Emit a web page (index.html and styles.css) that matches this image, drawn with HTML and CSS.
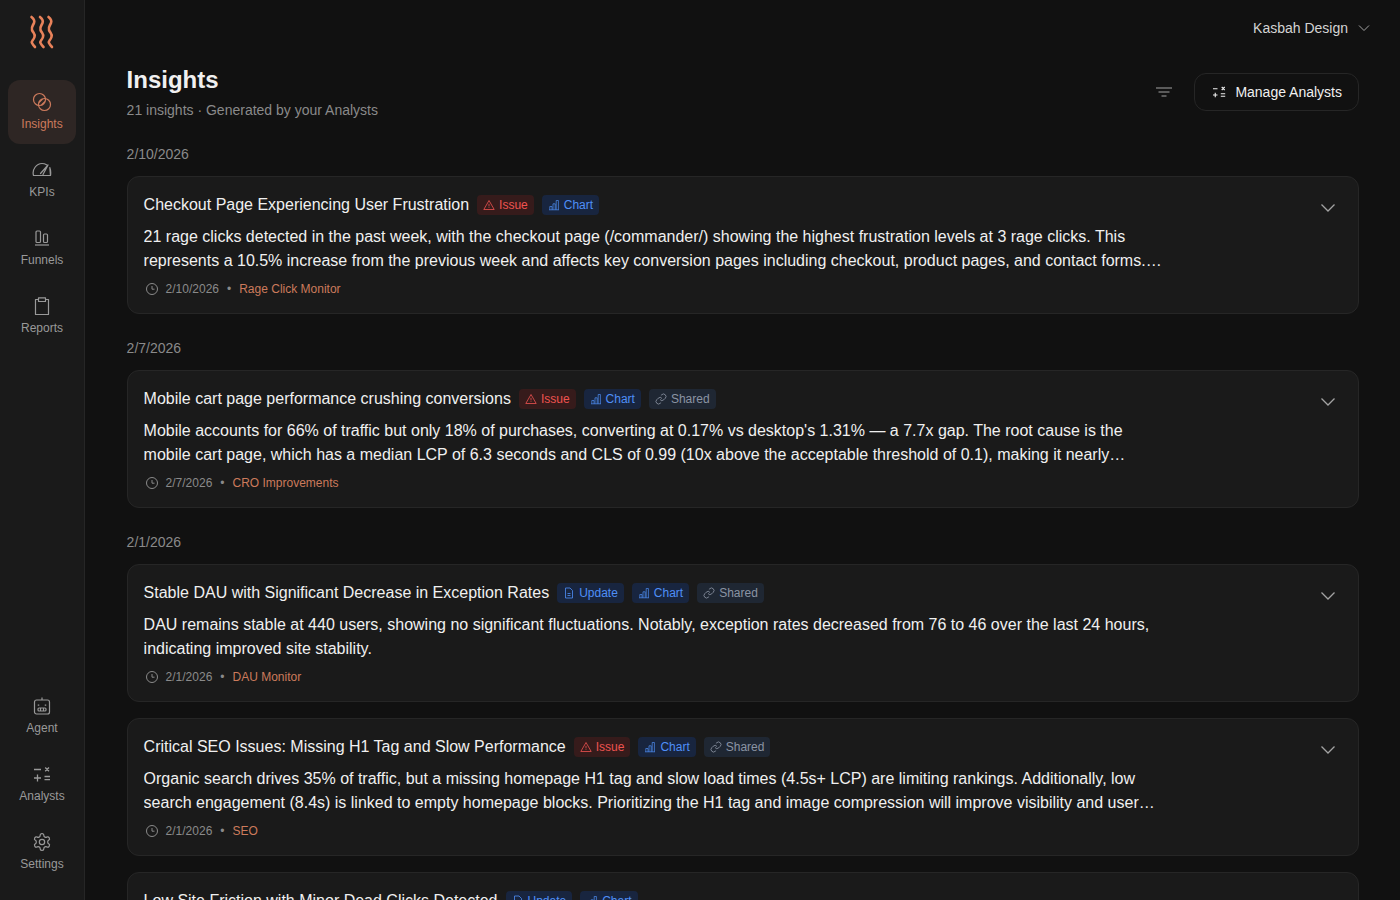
FILE: index.html
```html
<!DOCTYPE html>
<html lang="en">
<head>
  <meta charset="UTF-8">
  <title>Insights</title>
  <link rel="stylesheet" href="styles.css">
</head>
<body>
  <!-- tag and card icons, reused below -->
  <svg class="sprite" xmlns="http://www.w3.org/2000/svg">
    <symbol id="i-issue" viewBox="0 0 12 12">
      <path d="M6 1.500L11.200 10.500H.8z" stroke-linejoin="round"/><path d="M6 4.800v2.600M6 8.300v.7"/>
    </symbol>
    <symbol id="i-chart" viewBox="0 0 12 12">
      <path stroke-width=".7" d="M1 10.800h10M1.800 10.800V7.500h2.200v3.300M5 10.800V4.800h2.200v6M8.200 10.800V1.500h2.200v9.300"/>
    </symbol>
    <symbol id="i-shared" viewBox="0 0 24 24">
      <path stroke-width="1.700" d="M10 13a5 5 0 0 0 7.540.54l3-3a5 5 0 0 0-7.070-7.070l-1.720 1.710"/>
      <path stroke-width="1.700" d="M14 11a5 5 0 0 0-7.540-.54l-3 3a5 5 0 0 0 7.070 7.070l1.710-1.710"/>
    </symbol>
    <symbol id="i-update" viewBox="0 0 12 12">
      <path d="M2.500 1h4.500l2.500 2.500V11h-7z" stroke-linejoin="round"/><path d="M4.500 6.500h3M4.500 8.500h3"/>
    </symbol>
    <symbol id="i-clock" viewBox="0 0 14 14">
      <circle cx="7" cy="7" r="5.500"/><path d="M7 4v3.200h2.500"/>
    </symbol>
    <symbol id="i-chevron" viewBox="0 0 16 16">
      <path d="M1.500 4.500L8 11l6.500-6.500"/>
    </symbol>
  </svg>

  <aside class="sidebar">
    <div class="logo">
      <svg width="26" height="34" viewBox="0 0 26 34" fill="none" stroke="#e8825a" stroke-width="2.600" stroke-linecap="round">
        <path d="M2.500 2c2.500 2 3.500 3.500 2.500 6S2 12 3 15s3.500 3.500 2.500 7S2 26 3 28s2 3 3 4"/>
        <path d="M11 2c2.500 2 3.500 3.500 2.500 6s-3 4-2 7 3.500 3.500 2.500 7-3.500 4-2.500 6 2 3 3 4"/>
        <path d="M19.500 2c2.500 2 3.500 3.500 2.500 6s-3 4-2 7 3.500 3.500 2.500 7-3.500 4-2.500 6 2 3 3 4"/>
      </svg>
    </div>
    <nav class="nav">
      <a class="nav-item active">
        <svg class="nav-icon" viewBox="0 0 20 20" fill="none" stroke="currentColor" stroke-width="1.200">
          <circle cx="7.500" cy="7.500" r="6"/><circle cx="12.500" cy="12.500" r="6"/>
          <path d="M7 10.500l3.500-3.500M9.500 13l3.500-3.500"/>
        </svg>
        Insights
      </a>
      <a class="nav-item">
        <svg class="nav-icon" viewBox="0 0 20 20" fill="none" stroke="currentColor" stroke-width="1.200" stroke-linejoin="round" stroke-linecap="round">
          <path d="M1.500 15.500c-1.700-6 3-12 8.500-12 1.800 0 3.300.5 4.500 1.300M17.800 7.500c1 2.700 1.100 5.500.7 8z"/>
          <path d="M1.500 15.500h17M8.500 13.500l7.500-8.500M11 14.500l5-9.500"/>
        </svg>
        KPIs
      </a>
      <a class="nav-item">
        <svg class="nav-icon" viewBox="0 0 20 20" fill="none" stroke="currentColor" stroke-width="1.200">
          <rect x="4" y="3" width="4.500" height="11.500" rx="1"/><rect x="11.500" y="6" width="4" height="8.500" rx="1"/>
          <path d="M3 17h14"/>
        </svg>
        Funnels
      </a>
      <a class="nav-item">
        <svg class="nav-icon" viewBox="0 0 20 20" fill="none" stroke="currentColor" stroke-width="1.200" stroke-linejoin="round">
          <path d="M6.500 3.500H3.500v15h13v-15h-3"/><path d="M6.500 1.800h7v3.700h-7z"/>
        </svg>
        Reports
      </a>
      <div class="nav-spacer"></div>
      <a class="nav-item">
        <svg class="nav-icon" viewBox="0 0 20 20" fill="none" stroke="currentColor" stroke-width="1.200">
          <rect x="2.500" y="4" width="15" height="14" rx="2"/><path d="M10 1.500V4"/>
          <path d="M6.500 8.500v1.200M13.500 8.500v1.200" stroke-width="1.500"/>
          <rect x="6" y="12" width="8" height="3" rx="1"/><path d="M8.500 12v3M11.500 12v3"/>
        </svg>
        Agent
      </a>
      <a class="nav-item">
        <svg class="nav-icon" viewBox="0 0 20 20" fill="none" stroke="currentColor" stroke-width="1.300">
          <path d="M2 5.500h7M13.200 3.500l3.800 3.800M17 3.500l-3.800 3.800M2 14h7M5.500 10.500v7M12.500 12.500H18M12.500 15.700H18"/>
        </svg>
        Analysts
      </a>
      <a class="nav-item">
        <svg class="nav-icon" viewBox="0 0 24 24" fill="none" stroke="currentColor" stroke-width="1.450" stroke-linejoin="round">
          <path d="M12.220 2h-.44a2 2 0 0 0-2 2v.18a2 2 0 0 1-1 1.730l-.43.250a2 2 0 0 1-2 0l-.15-.08a2 2 0 0 0-2.730.730l-.22.380a2 2 0 0 0 .730 2.730l.15.100a2 2 0 0 1 1 1.720v.510a2 2 0 0 1-1 1.740l-.15.090a2 2 0 0 0-.730 2.730l.22.380a2 2 0 0 0 2.730.730l.15-.08a2 2 0 0 1 2 0l.43.250a2 2 0 0 1 1 1.730V20a2 2 0 0 0 2 2h.44a2 2 0 0 0 2-2v-.18a2 2 0 0 1 1-1.730l.43-.25a2 2 0 0 1 2 0l.15.080a2 2 0 0 0 2.730-.730l.22-.390a2 2 0 0 0-.730-2.730l-.15-.080a2 2 0 0 1-1-1.740v-.5a2 2 0 0 1 1-1.740l.15-.090a2 2 0 0 0 .730-2.730l-.22-.380a2 2 0 0 0-2.730-.730l-.15.080a2 2 0 0 1-2 0l-.43-.25a2 2 0 0 1-1-1.730V4a2 2 0 0 0-2-2z"/>
          <circle cx="12" cy="12" r="3.200"/>
        </svg>
        Settings
      </a>
    </nav>
  </aside>

  <div class="main">
    <div class="topbar">
      <span class="account">Kasbah Design</span>
      <svg width="12" height="12" viewBox="0 0 12 12" fill="none" stroke="#a3a3a3" stroke-width="1"><path d="M1 3.500l5 5 5-5"/></svg>
    </div>

    <div class="content">
      <header class="page-head">
        <div>
          <h1>Insights</h1>
          <p class="subtitle">21 insights · Generated by your Analysts</p>
        </div>
        <div class="head-actions">
          <svg width="18" height="18" viewBox="0 0 18 18" fill="none" stroke="#a3a3a3" stroke-width="1.200"><path d="M1 5h16M3.500 9h11M6.500 13h5"/></svg>
          <button class="manage-btn">
            <svg width="14" height="14" viewBox="0 0 14 14" fill="none" stroke="#f0f0f0" stroke-width="1.100"><path d="M1 3.700h4.500M9.700 2l3 3M12.700 2l-3 3M1 10h4.500M3.250 7.800v4.400M8.800 8.700h4.400M8.800 11.300h4.400"/></svg>
            Manage Analysts
          </button>
        </div>
      </header>

      <section class="group">
        <div class="group-date">2/10/2026</div>
        <article class="card">
          <div class="card-body">
            <div class="card-title">
              <span>Checkout Page Experiencing User Frustration</span>
              <span class="tag tag-issue"><svg class="tag-icon"><use href="#i-issue"/></svg>Issue</span>
              <span class="tag tag-chart"><svg class="tag-icon"><use href="#i-chart"/></svg>Chart</span>
            </div>
            <p class="card-text">21 rage clicks detected in the past week, with the checkout page (/commander/) showing the highest frustration levels at 3 rage clicks. This represents a 10.5% increase from the previous week and affects key conversion pages including checkout, product pages, and contact forms. Addressing these friction points should be a priority for the next sprint.</p>
            <div class="card-meta">
              <svg class="clock"><use href="#i-clock"/></svg>
              <span>2/10/2026</span><span class="dot">•</span><span class="source">Rage Click Monitor</span>
            </div>
          </div>
          <svg class="card-chevron"><use href="#i-chevron"/></svg>
        </article>
      </section>

      <section class="group">
        <div class="group-date">2/7/2026</div>
        <article class="card">
          <div class="card-body">
            <div class="card-title">
              <span>Mobile cart page performance crushing conversions</span>
              <span class="tag tag-issue"><svg class="tag-icon"><use href="#i-issue"/></svg>Issue</span>
              <span class="tag tag-chart"><svg class="tag-icon"><use href="#i-chart"/></svg>Chart</span>
              <span class="tag tag-shared"><svg class="tag-icon"><use href="#i-shared"/></svg>Shared</span>
            </div>
            <p class="card-text">Mobile accounts for 66% of traffic but only 18% of purchases, converting at 0.17% vs desktop's 1.31% — a 7.7x gap. The root cause is the mobile cart page, which has a median LCP of 6.3 seconds and CLS of 0.99 (10x above the acceptable threshold of 0.1), making it nearly impossible for shoppers to complete their purchase on a phone.</p>
            <div class="card-meta">
              <svg class="clock"><use href="#i-clock"/></svg>
              <span>2/7/2026</span><span class="dot">•</span><span class="source">CRO Improvements</span>
            </div>
          </div>
          <svg class="card-chevron"><use href="#i-chevron"/></svg>
        </article>
      </section>

      <section class="group">
        <div class="group-date">2/1/2026</div>
        <article class="card">
          <div class="card-body">
            <div class="card-title">
              <span>Stable DAU with Significant Decrease in Exception Rates</span>
              <span class="tag tag-chart"><svg class="tag-icon"><use href="#i-update"/></svg>Update</span>
              <span class="tag tag-chart"><svg class="tag-icon"><use href="#i-chart"/></svg>Chart</span>
              <span class="tag tag-shared"><svg class="tag-icon"><use href="#i-shared"/></svg>Shared</span>
            </div>
            <p class="card-text">DAU remains stable at 440 users, showing no significant fluctuations. Notably, exception rates decreased from 76 to 46 over the last 24 hours, indicating improved site stability.</p>
            <div class="card-meta">
              <svg class="clock"><use href="#i-clock"/></svg>
              <span>2/1/2026</span><span class="dot">•</span><span class="source">DAU Monitor</span>
            </div>
          </div>
          <svg class="card-chevron"><use href="#i-chevron"/></svg>
        </article>

        <article class="card">
          <div class="card-body">
            <div class="card-title">
              <span>Critical SEO Issues: Missing H1 Tag and Slow Performance</span>
              <span class="tag tag-issue"><svg class="tag-icon"><use href="#i-issue"/></svg>Issue</span>
              <span class="tag tag-chart"><svg class="tag-icon"><use href="#i-chart"/></svg>Chart</span>
              <span class="tag tag-shared"><svg class="tag-icon"><use href="#i-shared"/></svg>Shared</span>
            </div>
            <p class="card-text">Organic search drives 35% of traffic, but a missing homepage H1 tag and slow load times (4.5s+ LCP) are limiting rankings. Additionally, low search engagement (8.4s) is linked to empty homepage blocks. Prioritizing the H1 tag and image compression will improve visibility and user experience across the whole site.</p>
            <div class="card-meta">
              <svg class="clock"><use href="#i-clock"/></svg>
              <span>2/1/2026</span><span class="dot">•</span><span class="source">SEO</span>
            </div>
          </div>
          <svg class="card-chevron"><use href="#i-chevron"/></svg>
        </article>

        <article class="card">
          <div class="card-body">
            <div class="card-title">
              <span>Low Site Friction with Minor Dead Clicks Detected</span>
              <span class="tag tag-chart"><svg class="tag-icon"><use href="#i-update"/></svg>Update</span>
              <span class="tag tag-chart"><svg class="tag-icon"><use href="#i-chart"/></svg>Chart</span>
            </div>
          </div>
        </article>
      </section>
    </div>
  </div>
</body>
</html>
```

FILE: styles.css
```css
* {
  box-sizing: border-box;
}

body {
  margin: 0;
  height: 100vh;
  display: flex;
  overflow: hidden;
  font-family: "Liberation Sans", Arial, sans-serif;
  background: #111111;
  color: #f0f0f0;
}

.sprite {
  display: none;
}

/* Sidebar */
.sidebar {
  width: 85px;
  flex-shrink: 0;
  display: flex;
  flex-direction: column;
  background: #1a1a1a;
  border-right: 1px solid #262626;
}

.logo {
  height: 64px;
  display: flex;
  align-items: center;
  justify-content: center;
  margin-bottom: 16px;
}

.nav {
  flex: 1;
  display: flex;
  flex-direction: column;
  gap: 4px;
  padding: 0 8px 16px;
}

.nav-spacer {
  flex: 1;
}

.nav-item {
  height: 64px;
  display: flex;
  flex-direction: column;
  align-items: center;
  justify-content: center;
  gap: 4px;
  border-radius: 12px;
  font-size: 12px;
  line-height: 16px;
  color: #999999;
}

.nav-item.active {
  background: #2e2624;
  color: #cc7a5c;
}

.nav-icon {
  width: 20px;
  height: 20px;
}

/* Main area */
.main {
  flex: 1;
  min-width: 0;
  display: flex;
  flex-direction: column;
}

.topbar {
  height: 56px;
  flex-shrink: 0;
  display: flex;
  align-items: center;
  justify-content: flex-end;
  gap: 10px;
  padding-right: 30px;
}

.account {
  font-size: 14px;
  color: #d4d4d4;
}

.content {
  flex: 1;
  padding: 8px 41px 0 41.6px;
}

.page-head {
  display: flex;
  justify-content: space-between;
  align-items: center;
  margin-bottom: 24px;
}

h1 {
  margin: 0;
  font-size: 24px;
  line-height: 32px;
  font-weight: 700;
}

.subtitle {
  margin: 4px 0 0;
  font-size: 14px;
  line-height: 20px;
  color: #8a8a8a;
}

.head-actions {
  display: flex;
  align-items: center;
  gap: 21px;
}

.manage-btn {
  height: 38px;
  padding: 0 16px 0 17px;
  display: flex;
  align-items: center;
  gap: 9px;
  background: #111111;
  border: 1px solid #262626;
  border-radius: 12px;
  font: inherit;
  font-size: 14px;
  color: #f0f0f0;
}

/* Groups and cards */
.group {
  display: flex;
  flex-direction: column;
  gap: 16px;
  margin-bottom: 24px;
}

.group-date {
  font-size: 14px;
  line-height: 20px;
  color: #8a8a8a;
  margin-bottom: -4px;
}

.card {
  display: flex;
  justify-content: space-between;
  min-height: 138px;
  padding: 16px;
  background: #1a1a1a;
  border: 1px solid #262626;
  border-radius: 12px;
}

.card-body {
  width: 1020px;
}

.card-title {
  display: flex;
  align-items: center;
  gap: 8px;
  font-size: 16px;
  line-height: 24px;
  color: #f0f0f0;
}

.tag {
  height: 20px;
  display: inline-flex;
  align-items: center;
  gap: 4px;
  padding: 0 6px;
  border-radius: 4px;
  font-size: 12px;
  line-height: 16px;
}

.tag-icon {
  width: 12px;
  height: 12px;
  fill: none;
  stroke: currentColor;
  stroke-width: 0.8;
}

.tag-issue {
  background: #361b1b;
  color: #ef5350;
}

.tag-chart {
  background: #18253f;
  color: #4f8ff7;
}

.tag-shared {
  background: #1f2733;
  color: #8b94a3;
}

.card-text {
  margin: 8px 0;
  font-size: 16px;
  line-height: 24px;
  color: #f0f0f0;
  display: -webkit-box;
  -webkit-box-orient: vertical;
  -webkit-line-clamp: 2;
  overflow: hidden;
}

.card-meta {
  display: flex;
  align-items: center;
  font-size: 12px;
  line-height: 16px;
  color: #8a8a8a;
}

.clock {
  width: 14px;
  height: 14px;
  margin: 0 7px 0 1px;
  fill: none;
  stroke: currentColor;
}

.dot {
  margin: 0 8px;
}

.source {
  color: #cc7a5c;
}

.card-chevron {
  width: 16px;
  height: 16px;
  margin: 7px 6px 0 0;
  flex-shrink: 0;
  fill: none;
  stroke: #a3a3a3;
  stroke-width: 1.3;
}
```
